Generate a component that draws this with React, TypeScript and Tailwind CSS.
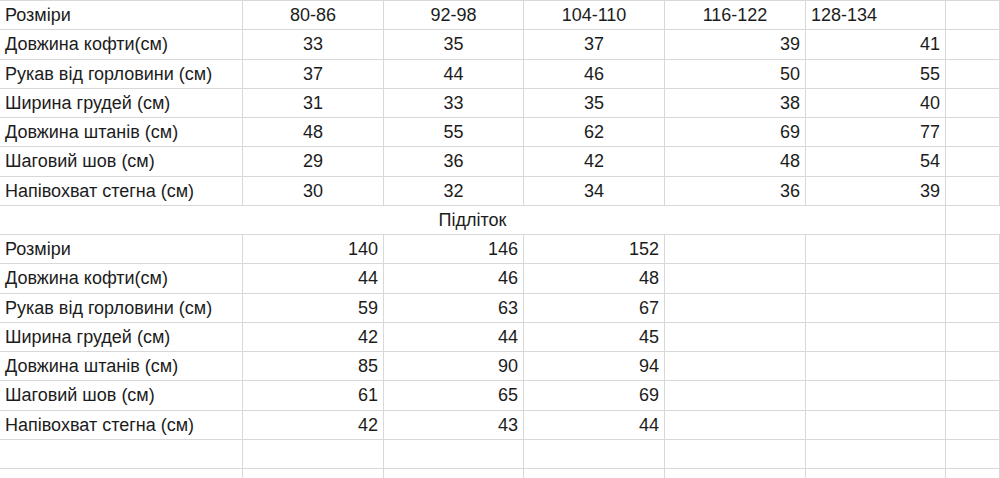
type Align = "l" | "c" | "r";
type Cell = { t: string; a: Align };

const labels = [
  "Довжина кофти(см)",
  "Рукав від горловини (см)",
  "Ширина грудей (см)",
  "Довжина штанів (см)",
  "Шаговий шов (см)",
  "Напівохват стегна (см)",
];

const kidsSizes: Cell[] = [
  { t: "80-86", a: "c" },
  { t: "92-98", a: "c" },
  { t: "104-110", a: "c" },
  { t: "116-122", a: "c" },
  { t: "128-134", a: "l" },
];

const kidsData = [
  [33, 35, 37, 39, 41],
  [37, 44, 46, 50, 55],
  [31, 33, 35, 38, 40],
  [48, 55, 62, 69, 77],
  [29, 36, 42, 48, 54],
  [30, 32, 34, 36, 39],
];

const teenData = [
  [44, 46, 48],
  [59, 63, 67],
  [42, 44, 45],
  [85, 90, 94],
  [61, 65, 69],
  [42, 43, 44],
];

const alignClass: Record<Align, string> = {
  l: "justify-start",
  c: "justify-center",
  r: "justify-end",
};

function Row({ cells }: { cells: Cell[] }) {
  const full: Cell[] = [...cells];
  while (full.length < 7) full.push({ t: "", a: "l" });
  return (
    <>
      {full.map((c, i) => (
        <div
          key={i}
          className={`flex h-[29.25px] items-center border-b border-r border-[#d8d8d8] px-[5px] ${alignClass[c.a]}`}
        >
          {c.t}
        </div>
      ))}
    </>
  );
}

export default function App() {
  return (
    <div
      className="h-[478px] w-[1000px] overflow-hidden bg-white text-[18px] leading-none text-[#1c1c1c]"
      style={{ fontFamily: '"Liberation Sans", Arial, sans-serif' }}
    >
      <div className="grid grid-cols-[243px_141px_140px_141px_141px_140px_1fr] border-t border-[#d8d8d8]">
        <Row cells={[{ t: "Розміри", a: "l" }, ...kidsSizes]} />
        {labels.map((l, i) => (
          <Row
            key={l}
            cells={[
              { t: l, a: "l" },
              ...kidsData[i].map((v, j) => ({ t: String(v), a: (j < 3 ? "c" : "r") as Align })),
            ]}
          />
        ))}

        <div className="col-span-6 flex h-[29.25px] items-center justify-center border-b border-r border-[#d8d8d8]">
          Підліток
        </div>
        <div className="h-[29.25px] border-b border-[#d8d8d8]" />

        <Row
          cells={[
            { t: "Розміри", a: "l" },
            { t: "140", a: "r" },
            { t: "146", a: "r" },
            { t: "152", a: "r" },
          ]}
        />
        {labels.map((l, i) => (
          <Row
            key={"t" + l}
            cells={[{ t: l, a: "l" }, ...teenData[i].map((v) => ({ t: String(v), a: "r" as Align }))]}
          />
        ))}
        <Row cells={[]} />
        <Row cells={[]} />
      </div>
    </div>
  );
}
